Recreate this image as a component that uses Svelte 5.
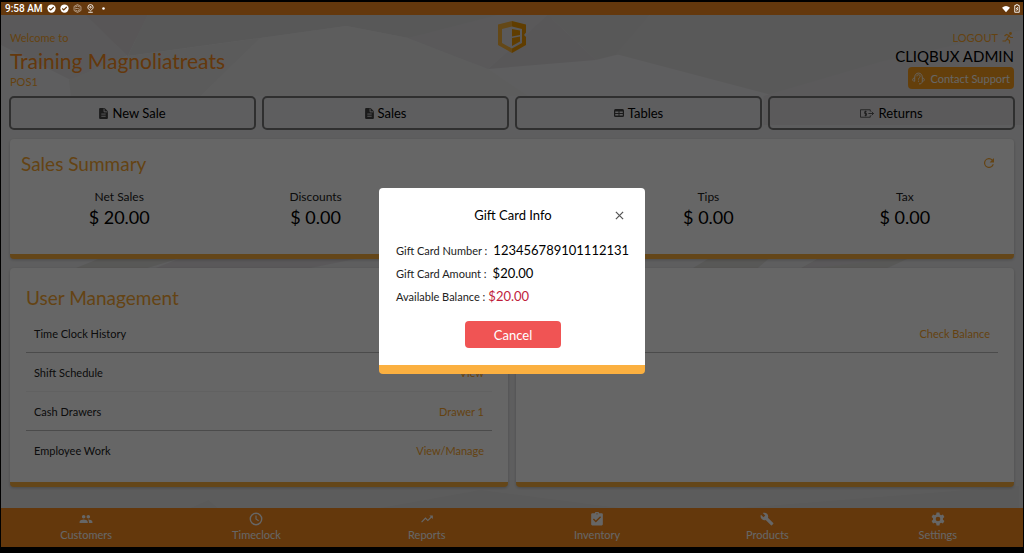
<script lang="ts">
  const actions = [
    { label: "New Sale", icon: "doc" },
    { label: "Sales", icon: "doc" },
    { label: "Tables", icon: "table" },
    { label: "Returns", icon: "return" },
  ];

  const summary = [
    { label: "Net Sales", value: "$ 20.00" },
    { label: "Discounts", value: "$ 0.00" },
    { label: "", value: "" },
    { label: "Tips", value: "$ 0.00" },
    { label: "Tax", value: "$ 0.00" },
  ];

  const panels = [
    {
      title: "User Management",
      rows: [
        { label: "Time Clock History", link: "View" },
        { label: "Shift Schedule", link: "View", faint: true },
        { label: "Cash Drawers", link: "Drawer 1" },
        { label: "Employee Work", link: "View/Manage" },
      ],
    },
    {
      title: "Gift Card",
      rows: [{ label: "Balance", link: "Check Balance" }],
    },
  ];

  // 24x24 icon outlines for the bottom bar
  const tabs = [
    { label: "Customers", path: "M16 11c1.66 0 2.99-1.34 2.99-3S17.66 5 16 5s-3 1.34-3 3 1.34 3 3 3zm-8 0c1.66 0 2.99-1.34 2.99-3S9.66 5 8 5 5 6.34 5 8s1.34 3 3 3zm0 2c-2.33 0-7 1.17-7 3.5V19h14v-2.500c0-2.330-4.670-3.500-7-3.500zm8 0c-.29 0-.62.02-.97.05 1.160.840 1.970 1.970 1.970 3.450V19h6v-2.500c0-2.330-4.670-3.500-7-3.500z" },
    { label: "Timeclock", path: "M12 1a11 11 0 1 0 0 22 11 11 0 0 0 0-22zm0 2.400a8.600 8.600 0 1 1 0 17.200 8.600 8.600 0 0 1 0-17.200zM11 6h2v5.500l4 2.500-1 1.700-5-3.200z" },
    { label: "Reports", path: "M16 6l2.290 2.290-4.880 4.880-4-4L2 16.590 3.410 18l6-6 4 4 6.300-6.290L22 12V6z" },
    { label: "Inventory", path: "M20 2h-4.200a4 4 0 0 0-7.600 0H4a2 2 0 0 0-2 2v17a2 2 0 0 0 2 2h16a2 2 0 0 0 2-2V4a2 2 0 0 0-2-2zm-8 0a1.200 1.200 0 1 1 0 2.400A1.200 1.200 0 0 1 12 2zm-2 16l-5-5 1.700-1.700 3.300 3.300 7.300-7.300L19 9z" },
    { label: "Products", path: "M22.700 19l-9.100-9.100c.9-2.300.4-5-1.500-6.900-2-2-5-2.400-7.400-1.300L9 6 6 9 1.600 4.700C.4 7.100.9 10.100 2.900 12.100c1.900 1.900 4.600 2.400 6.900 1.500l9.100 9.100c.4.4 1 .4 1.400 0l2.300-2.300c.5-.4.5-1.100.1-1.400z" },
    { label: "Settings", path: "M9.500 1h5l.6 3.200 2.300 1.300 3.100-1.100 2.500 4.300-2.500 2.100v2.400l2.500 2.100-2.500 4.300-3.100-1.100-2.300 1.300-.6 3.200h-5l-.6-3.200-2.300-1.300-3.100 1.100L1 15.300l2.500-2.100v-2.400L1 8.700l2.500-4.300 3.100 1.100 2.300-1.300zM12 8a4 4 0 1 0 0 8 4 4 0 0 0 0-8z" },
  ];

  let modalOpen = $state(true);

  function closeModal() {
    modalOpen = false;
  }
</script>

<div class="app">
  <svg class="backdrop" viewBox="0 2 1024 545" preserveAspectRatio="none" aria-hidden="true">
    <rect width="1024" height="553" fill="#ebebed" />
    <path d="M0 15H150L125 56 70 80 0 45z" fill="#e1dfe1" />
    <path d="M85 15h62l-20 41z" fill="#dbd8da" />
    <path d="M147 15H560L470 62 408 38 346 26 260 38 127 56z" fill="#dddddd" />
    <path d="M127 56l133-18-60 58H70l-2-16z" fill="#e4e4e4" />
    <path d="M346 26l62 12 80 31 40 27H200l60-58z" fill="#e8e8e8" />
    <path d="M408 38l90-23h50l-60 54z" fill="#e0dfe2" />
    <path d="M548 15l48 45-108 9z" fill="#dcd9dd" />
    <path d="M548 15h102l-30 39-24 6z" fill="#dddbdc" />
    <path d="M650 15h374v20L860 85l-50 20-194-51z" fill="#dfdedf" />
    <path d="M764 96l120-35 140-31v95H764z" fill="#e3e1e4" />
    <path d="M70 270l30-12h80l-40 12zM690 270l20-12h60l-14 12zM798 270l22-12h90l-26 12z" fill="#dddcd9" />
    <path d="M150 270l30-12h180l-60 12zM800 270l20-12h80z" fill="#e0dce0" />
    <path d="M0 480h1024v30H0z" fill="#e7e6e6" />
    <path d="M190 508l18-8 9 8zM380 508l100-18 140 18zM740 508l280-22v22z" fill="#e1e1e1" />
  </svg>

  <div class="status">
    <span class="time">9:58 AM</span>
    <svg class="glyph" viewBox="0 0 12 12"><circle cx="6" cy="6" r="5.500" fill="#fff" /><path d="M3 6l2 2 4-4" fill="none" stroke="#64380d" stroke-width="1.500" /></svg>
    <svg class="glyph" viewBox="0 0 12 12"><circle cx="6" cy="6" r="5.500" fill="#fff" /><path d="M3 6l2 2 4-4" fill="none" stroke="#64380d" stroke-width="1.500" /></svg>
    <svg class="glyph" viewBox="0 0 12 12" fill="none" stroke="#c9b7a5" stroke-width="1"><path d="M6 .7l4.600 2.600v5.400L6 11.300 1.400 8.700V3.300zM3 4l3-1.500L9 4M3 6h3l3 1M3 8l3 1.500L9 8" /></svg>
    <svg class="glyph" viewBox="0 0 12 12" fill="none" stroke="#fff" stroke-width="1.200"><path d="M6 9C3.500 7 2.500 6 2.500 4.300a3.500 3.500 0 0 1 7 0C9.500 6 8.500 7 6 9zM3 11h6" /><circle cx="6" cy="4.300" r="1" /></svg>
    <svg class="glyph" viewBox="0 0 12 12"><circle cx="6" cy="6" r="1.700" fill="#fff" /></svg>
    <span class="spacer"></span>
    <svg class="wifi" viewBox="0 0 12 12"><path d="M0 4q6-5 12 0L6 11z" fill="#fff" /></svg>
    <svg class="battery" viewBox="0 0 8 12" fill="none" stroke="#fff" stroke-width="1.200"><path d="M2.500 2V1h3v1H7v9H1V2zM5 4L3 6.500h2L3.500 9" /></svg>
  </div>

  <header>
    <div class="store">
      <span class="small">Welcome to</span>
      <h1>Training Magnoliatreats</h1>
      <span class="pos">POS1</span>
    </div>
    <svg class="logo" viewBox="0 0 28 32" aria-label="Cliqbux logo">
      <path d="M14 0L0 3.500V24l14 8V27.500L4 22V8l10-2.500z" fill="#fbb43a" />
      <path d="M14 0l14 3.500v8L26 14l2 2v8l-14 8v-4.500L24 22V8L14 5.500z" fill="#f09a00" />
      <path d="M14 8l8 1.500V14l-8 1.500zM14 17l8-1.500v5L14 25z" fill="#f09a00" />
    </svg>
    <div class="account">
      <button class="logout">
        LOGOUT
        <svg viewBox="0 0 24 24" fill="none" stroke="currentColor" stroke-width="2.400"><circle cx="17" cy="3" r="1.600" fill="currentColor" /><path d="M5 8l4-3 5 2-4 7 5 3v6M14 7l3 4h5M10 14l-3 4H1" /></svg>
      </button>
      <span class="user">CLIQBUX ADMIN</span>
      <button class="support">
        <svg viewBox="0 0 24 24" fill="none" stroke="currentColor" stroke-width="1.600"><path d="M5 17H3c-3-2-2-6 2-6zm14 0h2c3-2 2-6-2-6zM5 11C4-1 20-1 19 11M19 17c0 4-3 5-6 5M9 8c0-4 6-4 6 0 0 3-3 2-3 6M12 16v2" /></svg>
        Contact Support
      </button>
    </div>
  </header>

  <div class="actions">
    {#each actions as a}
      <button class="action">
        {#if a.icon === "doc"}
          <svg class="doc" viewBox="0 0 16 20"><path d="M2 0h8l6 6v12a2 2 0 0 1-2 2H2a2 2 0 0 1-2-2V2a2 2 0 0 1 2-2z" fill="#444" /><path d="M9 1v6h6M4 11h8M4 15h8" fill="none" stroke="#ececee" stroke-width="1.600" /></svg>
        {:else if a.icon === "table"}
          <svg class="table" viewBox="0 0 20 16"><rect width="20" height="16" rx="3" fill="#444" /><path d="M2.500 5h6.500v3H2.500zM11 5h6.500v3H11zM2.500 10h6.500v3H2.500zM11 10h6.500v3H11z" fill="#ececee" /></svg>
        {:else}
          <svg class="return" viewBox="0 0 30 18" fill="none" stroke="#444" stroke-width="1.800"><path d="M22 5V1H1v16h21v-4M18 9h11M25 5l4 4-4 4M14 5h-4v4h4v4h-4M12 3v12" /></svg>
        {/if}
        {a.label}
      </button>
    {/each}
  </div>

  <section class="card sales">
    <div class="cardHead">
      <h2>Sales Summary</h2>
      <button class="refresh" aria-label="Refresh">
        <svg viewBox="0 0 16 16"><path d="M13.650 2.350A8 8 0 1 0 15.730 10h-2.080A6 6 0 1 1 8 2c1.660 0 3.140.690 4.220 1.780L9 7h7V0z" fill="currentColor" /></svg>
      </button>
    </div>
    <div class="stats">
      {#each summary as s}
        <div class="stat">
          <span class="statLabel">{s.label}</span>
          <span class="statValue">{s.value}</span>
        </div>
      {/each}
    </div>
  </section>

  <div class="panels">
    {#each panels as panel}
      <section class="card panel">
        <h2>{panel.title}</h2>
        <ul>
          {#each panel.rows as row}
            <li class:faint={row.faint}>
              <span>{row.label}</span>
              <a href="#{row.label}">{row.link}</a>
            </li>
          {/each}
        </ul>
      </section>
    {/each}
  </div>

  <nav>
    {#each tabs as tab}
      <a href="#{tab.label}">
        <svg viewBox="0 0 24 24"><path d={tab.path} fill="currentColor" fill-rule="evenodd" /></svg>
        {tab.label}
      </a>
    {/each}
  </nav>

  {#if modalOpen}
    <div class="overlay">
      <div class="modal" role="dialog" aria-labelledby="modalTitle">
        <div class="modalHead">
          <h3 id="modalTitle">Gift Card Info</h3>
          <button class="close" aria-label="Close" onclick={closeModal}>
            <svg viewBox="0 0 10 10"><path d="M1 1l8 8M9 1L1 9" fill="none" stroke="#555" stroke-width="1.400" /></svg>
          </button>
        </div>
        <dl>
          <div><dt>Gift Card Number :</dt><dd>123456789101112131</dd></div>
          <div><dt>Gift Card Amount :</dt><dd>$20.00</dd></div>
          <div class="balance"><dt>Available Balance :</dt><dd>$20.00</dd></div>
        </dl>
        <button class="cancel" onclick={closeModal}>Cancel</button>
      </div>
    </div>
  {/if}
</div>

<style>
  :global(body) {
    background: #000;
  }

  .app {
    position: relative;
    box-sizing: border-box;
    min-height: 100vh;
    padding: 2px 1px 6px;
    display: flex;
    flex-direction: column;
    font-family: Lato, "Noto Sans", sans-serif;
    font-size: 11px;
    color: #000;
    background: #000;
  }

  .backdrop {
    position: absolute;
    inset: 2px 1px 6px;
    width: calc(100% - 2px);
    height: calc(100% - 8px);
  }

  .app > :not(.backdrop):not(.overlay) {
    position: relative;
  }

  h1, h2, h3, ul, dl, dd {
    margin: 0;
    padding: 0;
    font-weight: 400;
  }

  button {
    font: inherit;
    border: none;
    background: none;
    padding: 0;
    cursor: pointer;
  }

  a {
    text-decoration: none;
  }

  svg {
    display: block;
    flex: none;
  }

  .app > .status {
    z-index: 3;
    display: flex;
    align-items: center;
    gap: 4px;
    height: 13px;
    padding: 0 3px 0 4px;
    background: #64380d;
    color: #fff;
    font-family: Roboto, sans-serif;
    font-size: 10px;
    font-weight: 500;
  }

  .glyph {
    width: 9px;
    height: 9px;
  }

  .spacer {
    flex: 1;
  }

  .wifi {
    width: 8px;
    height: 8px;
  }

  .battery {
    width: 6px;
    height: 9px;
  }

  header {
    display: grid;
    grid-template-columns: 1fr auto 1fr;
    padding: 15px 9px 7px;
  }

  .store,
  .account {
    display: flex;
    flex-direction: column;
    color: #fba62d;
  }

  .small {
    line-height: 16px;
  }

  h1 {
    font-size: 21px;
    line-height: 30px;
    color: #fa8c20;
  }

  .pos {
    line-height: 12px;
  }

  .logo {
    width: 28px;
    height: 32px;
    margin-top: -9px;
  }

  .account {
    align-items: flex-end;
  }

  .logout {
    display: flex;
    align-items: center;
    gap: 4px;
    line-height: 16px;
    color: #fba62d;
  }

  .logout svg {
    width: 12px;
    height: 12px;
  }

  .user {
    font-size: 15px;
    line-height: 21px;
    color: #000;
  }

  .support {
    display: flex;
    align-items: center;
    gap: 6px;
    height: 22px;
    padding: 0 4px;
    border-radius: 4px;
    background: #fb9e1c;
    color: #fff;
  }

  .support svg {
    width: 13px;
    height: 13px;
  }

  .actions {
    display: grid;
    grid-template-columns: repeat(4, 1fr);
    gap: 6px;
    padding: 0 8px;
  }

  .action {
    display: flex;
    align-items: center;
    justify-content: center;
    gap: 4px;
    height: 34px;
    border: 2px solid #777;
    border-radius: 5px;
    font-size: 13px;
    color: #000;
  }

  .doc {
    width: 9px;
    height: 11px;
  }

  .table {
    width: 10px;
    height: 8px;
  }

  .return {
    width: 14px;
    height: 9px;
  }

  .card {
    background: #fff;
    border-bottom: 5px solid #fbaf3f;
    border-radius: 4px;
    box-shadow: 0 1px 3px rgba(0,0,0,0.2);
  }

  h2 {
    font-size: 19px;
    line-height: 24px;
    color: #fba933;
  }

  .sales {
    margin: 9px 9px 0;
    padding: 13px 11px 25px;
  }

  .cardHead {
    display: flex;
    justify-content: space-between;
    align-items: center;
  }

  .refresh {
    color: #fba933;
    padding: 0 9px 3px;
  }

  .refresh svg {
    width: 10px;
    height: 10px;
  }

  .stats {
    display: grid;
    grid-template-columns: repeat(5, 1fr);
    margin-top: 13px;
  }

  .stat {
    display: flex;
    flex-direction: column;
    align-items: center;
  }

  .statLabel {
    font-size: 12px;
    line-height: 16px;
    color: #222;
  }

  .statValue {
    font-size: 18px;
    line-height: 24px;
  }

  .panels {
    flex: 1;
    display: grid;
    grid-template-columns: 1fr 1fr;
    gap: 8px;
    padding: 9px 9px 21px;
  }

  .panel {
    padding: 18px 16px 12px;
  }

  ul {
    margin-top: 4px;
    list-style: none;
  }

  li {
    box-sizing: border-box;
    display: flex;
    justify-content: space-between;
    align-items: center;
    height: 39px;
    padding: 0 8px;
    border-bottom: 1px solid #bbb;
    color: #222;
  }

  li a {
    color: #fba62d;
  }

  li.faint {
    border-color: #f3f3f3;
  }

  li:last-child:not(:first-child) {
    border-color: transparent;
  }

  nav {
    display: grid;
    grid-template-columns: repeat(6, 1fr);
    background: #fa8c20;
  }

  nav a {
    display: flex;
    flex-direction: column;
    align-items: center;
    gap: 2px;
    padding: 4px 0 5px;
    line-height: 14px;
    color: #fff;
  }

  nav svg {
    width: 14px;
    height: 14px;
  }

  .overlay {
    position: absolute;
    inset: 15px 1px 6px;
    z-index: 2;
    display: grid;
    place-items: center;
    background: rgba(0,0,0,0.6);
  }

  .modal {
    box-sizing: border-box;
    width: min(266px, 92vw);
    display: flex;
    flex-direction: column;
    padding: 16px 15px 17px 17px;
    border-bottom: 9px solid #fbb040;
    border-radius: 4px;
    background: #fff;
  }

  .modalHead {
    display: grid;
    grid-template-columns: 1fr auto 1fr;
    align-items: center;
  }

  h3 {
    grid-column: 2;
    font-size: 13px;
    line-height: 22px;
  }

  .close {
    justify-self: end;
    padding: 4px 6px;
  }

  .close svg {
    width: 9px;
    height: 9px;
  }

  dl {
    margin-top: 13px;
  }

  dl div {
    display: flex;
    align-items: center;
    gap: 6px;
    line-height: 23px;
    white-space: nowrap;
  }

  dt {
    color: #222;
  }

  dd {
    font-size: 13px;
  }

  .balance {
    gap: 3px;
  }

  .balance dd {
    color: #bf1e3c;
  }

  .cancel {
    align-self: center;
    width: 96px;
    height: 27px;
    margin-top: 13px;
    border-radius: 4px;
    background: #f05454;
    color: #fff;
    font-size: 13px;
  }
</style>
